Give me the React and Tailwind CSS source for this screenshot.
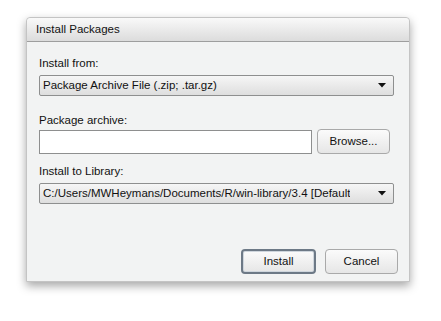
import React from "react";

const font = { fontFamily: '"Liberation Sans", Arial, sans-serif' };

const Caret = () => (
  <svg width="8" height="5" viewBox="0 0 8 5" className="shrink-0">
    <path d="M0 0 H8 L4 4.5 Z" fill="#111" />
  </svg>
);

const Select = ({ value }) => (
  <div className="flex h-[21px] w-[355px] items-center justify-between rounded-[2px] border border-[#8e8f8f] bg-gradient-to-b from-[#f6f6f6] to-[#dedede] pl-[3px] pr-[7px] text-[11.5px] text-[#111]">
    <span className="truncate whitespace-nowrap">{value}</span>
    <Caret />
  </div>
);

const Button = ({ children, primary, className = "" }) => (
  <button
    className={
      "flex h-[25px] items-center justify-center rounded-[4px] bg-gradient-to-b from-[#fbfbfb] to-[#e6e6e6] text-[11.5px] text-[#111] " +
      (primary
        ? "border-2 border-[#6d7986] shadow-[inset_0_0_0_1px_#cfd6dd]"
        : "border border-[#a9a9a9]") +
      " " +
      className
    }
  >
    {children}
  </button>
);

export default function App() {
  return (
    <div className="h-[321px] w-[441px] bg-white pl-[26px] pt-[17px]" style={font}>
      <div className="flex h-[265px] w-[384px] flex-col rounded-t-[4px] border border-[#c4c4c4] bg-[#f2f3f3] shadow-[0_4px_10px_rgba(0,0,0,0.35)]">
        <div className="flex h-[24px] items-center rounded-t-[4px] border-b border-[#9e9e9e] bg-gradient-to-b from-[#f9f9f9] to-[#dcdcdc] pl-[9px] text-[11.5px] text-[#111]">
          Install Packages
        </div>
        <div className="flex flex-1 flex-col pl-[12px] text-[11.5px] text-[#111]">
          <div className="mt-[13px] h-[16px] leading-[16px]">Install from:</div>
          <div className="mt-[4px]">
            <Select value="Package Archive File (.zip; .tar.gz)" />
          </div>
          <div className="mt-[16px] h-[16px] leading-[16px]">Package archive:</div>
          <div className="mt-[1px] flex items-center gap-[5px]">
            <div className="h-[24px] w-[273px] border border-[#8e8f8f] bg-white" />
            <Button className="w-[73px]">Browse...</Button>
          </div>
          <div className="mt-[9px] h-[16px] leading-[16px]">Install to Library:</div>
          <div className="mt-[4px]">
            <Select value="C:/Users/MWHeymans/Documents/R/win-library/3.4 [Default" />
          </div>
          <div className="mt-auto mb-[7px] flex justify-end gap-[9px] pr-[11px]">
            <Button primary className="w-[75px]">Install</Button>
            <Button className="w-[73px]">Cancel</Button>
          </div>
        </div>
      </div>
    </div>
  );
}
